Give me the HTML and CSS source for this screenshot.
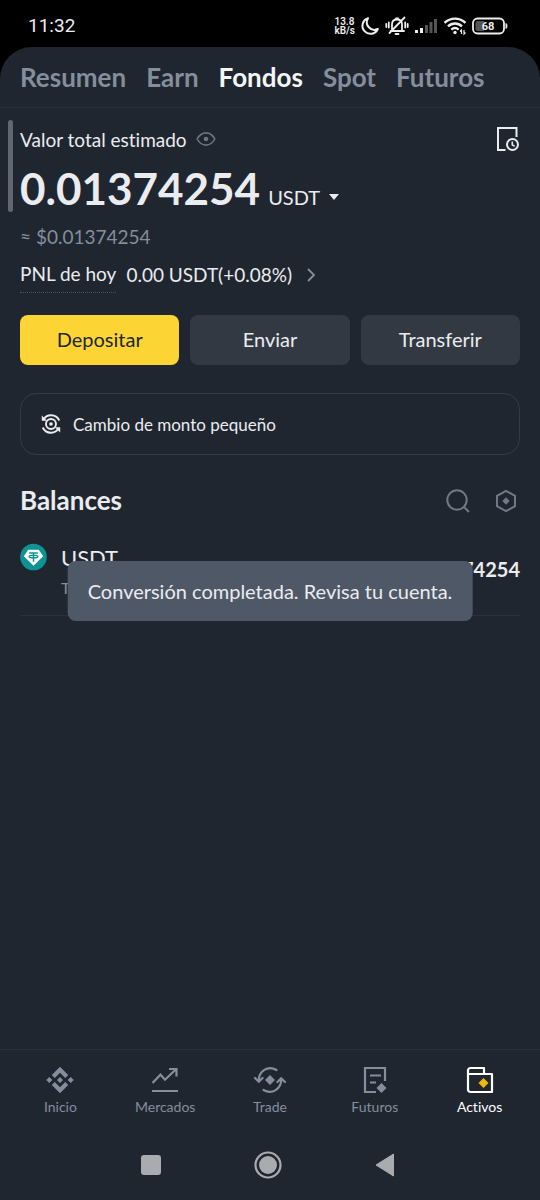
FILE: index.html
```
<!DOCTYPE html>
<html lang="es">
<head>
<meta charset="utf-8">
<meta name="viewport" content="width=device-width, initial-scale=1">
<title>Fondos</title>
<link rel="stylesheet" href="styles.css">
</head>
<body>
<div class="screen">
  <header class="status">
    <time class="clock">11:32</time>
    <div class="status-icons">
      <span class="speed">13.8<br>kB/s</span>
      <svg width="20" height="20" viewBox="0 0 20 20"><path d="M8 2.2A8 8 0 1 0 17.8 13 7.600 7.600 0 0 1 8 2.200Z" fill="none" stroke="#eee" stroke-width="2" stroke-linejoin="round"/></svg>
      <svg width="24" height="20" viewBox="0 0 24 20" fill="none" stroke="#eee" stroke-width="1.800" stroke-linecap="round" stroke-linejoin="round"><path d="M5.500 15h13.500M7 15V8.500c0-3 2-5 5-5s5 2 5 5V15M11 2.500h2M10.500 18h3M19.500 1.500 4.500 17M3.800 6.500v5M1.300 8v3M20.200 6.500v5M22.700 8v3"/></svg>
      <svg width="24" height="20" viewBox="0 0 24 20"><path d="M1 14h3v3H1zM6 12h3v5H6z" fill="#eee"/><path d="M11 9h3v8h-3zM15.500 6h3v11h-3zM20 3h3v14h-3z" fill="#555"/></svg>
      <svg width="24" height="20" viewBox="0 0 24 20" fill="none" stroke="#eee" stroke-width="2.400"><path d="M1.500 6.800c6-5.600 15-5.600 21 0M5 10.300c4-3.800 10-3.800 14 0M8.300 13.600c2.200-2 5.200-2 7.400 0"/><circle cx="12" cy="16.500" r="1.700" fill="#eee" stroke="none"/><path d="M18.500 18v-4l-1.500 1.500M21 14v4l1.500-1.500" stroke-width="1.200"/></svg>
      <svg width="36" height="18" viewBox="0 0 36 18"><rect x="1" y="1.500" width="31" height="15" rx="4.500" fill="none" stroke="#eee" stroke-width="1.800"/><path d="M5.500 4H12v10H5.500A2 2 0 0 1 3.500 12V6a2 2 0 0 1 2-2Z" fill="#555"/><path d="M34 6.500c1.300.8 1.300 4.200 0 5z" fill="#eee" stroke="#eee"/><text class="battery" x="16" y="13" text-anchor="middle">68</text></svg>
    </div>
  </header>

  <div class="app">
    <nav class="tabs">
      <a href="#">Resumen</a><a href="#">Earn</a><a href="#" class="active" aria-current="page">Fondos</a><a href="#">Spot</a><a href="#">Futuros</a>
    </nav>

    <main class="content">
      <span class="scroll-thumb"></span>
      <section class="summary">
        <div class="summary-head">
          <span>Valor total estimado</span>
          <button class="icon-btn" aria-label="Ocultar saldo"><svg width="20" height="16" viewBox="0 0 20 16" fill="none" stroke="#6b7480" stroke-width="1.600" stroke-linejoin="round"><path d="M1.200 8C3.300 4 6.200 1.900 10 1.900S16.700 4 18.800 8c-2.100 4-5 6.100-8.800 6.100S3.300 12 1.200 8Z"/><circle cx="10" cy="8" r="2.300" fill="#6b7480" stroke="none"/></svg></button>
          <button class="icon-btn history" aria-label="Historial"><svg width="24" height="26" viewBox="0 0 24 26" fill="none" stroke="#eaecef" stroke-width="2"><path d="M9.500 24H2V2h18.500v9"/><circle cx="16.500" cy="18.500" r="5.500"/><path d="M16.300 15.500v3.400l2.300 1.300" stroke-width="1.600"/></svg></button>
        </div>
        <div class="total">
          <strong>0.01374254</strong>
          <button class="unit">USDT <svg width="12" height="8" viewBox="0 0 12 8"><path d="M1 1h10L6 7z" fill="#eaecef"/></svg></button>
        </div>
        <p class="approx">≈ $0.01374254</p>
        <a class="pnl" href="#"><span class="pnl-label">PNL de hoy</span><span>0.00 USDT(+0.08%)</span><svg width="10" height="16" viewBox="0 0 10 16"><path d="m2 2 6 6-6 6" fill="none" stroke="#848e9c" stroke-width="1.800"/></svg></a>
      </section>

      <div class="actions">
        <button class="action primary">Depositar</button>
        <button class="action">Enviar</button>
        <button class="action">Transferir</button>
      </div>

      <button class="convert">
        <svg width="20" height="20" viewBox="0 0 20 20" fill="none" stroke="#eaecef" stroke-width="1.900"><circle cx="10" cy="10" r="5"/><circle cx="10" cy="10" r="1.800" fill="#eaecef" stroke="none"/><path d="M2.500 5.800C5.500-.4 15 -.4 18.300 6.500M17.500 14.200C14.500 20.400 5 20.400 1.700 13.500"/><path d="M.8 1.500v5.300h5.300zM19.200 18.500v-5.300h-5.300z" fill="#eaecef" stroke="none"/></svg>
        <span>Cambio de monto pequeño</span>
      </button>

      <section class="balances">
        <div class="balances-head">
          <h2>Balances</h2>
          <button class="icon-btn" aria-label="Buscar"><svg width="26" height="26" viewBox="0 0 26 26" fill="none" stroke="#707985" stroke-width="2"><circle cx="12" cy="12" r="9.700"/><path d="m19 19 5 5"/></svg></button>
          <button class="icon-btn" aria-label="Ajustes"><svg width="22" height="24" viewBox="0 0 22 24"><path d="M11 1.800 20 6.900v10.200l-9 5.100-9-5.100V6.900z" fill="none" stroke="#707985" stroke-width="2"/><path d="m11 8.300 3.700 3.700-3.700 3.700L7.300 12z" fill="#707985"/></svg></button>
        </div>
        <div class="asset">
          <svg width="27" height="28" viewBox="0 0 28 28"><circle cx="14" cy="14" r="13.800" fill="#0d9393"/><path d="M8.500 6.500h11l4.500 6.700L14 23 4 13.200z" fill="#fff"/><path d="M9.500 9.800h9M14 9.800V19M9.500 13.400c0-1.800 9-1.800 9 0s-9 1.800-9 0Z" fill="none" stroke="#0d9393" stroke-width="1.500"/></svg>
          <div class="asset-name"><span>USDT</span><small>TetherUS</small></div>
          <span class="asset-amount">0.01374254</span>
          <div class="toast" role="status">Conversión completada. Revisa tu cuenta.</div>
        </div>
      </section>
    </main>

    <nav class="bottom-nav">
      <a href="#"><svg width="28" height="28" viewBox="0 0 28 28" fill="#848e9c"><path d="M14 .8l8.200 8.200-3 3L14 6.800 8.800 12l-3-3zM14 27.200 5.800 19l3-3 5.200 5.200 5.200-5.200 3 3zM14 11l3 3-3 3-3-3zM3.300 11l3 3-3 3-3-3zM24.700 11l3 3-3 3-3-3z"/></svg>Inicio</a>
      <a href="#"><svg width="28" height="28" viewBox="0 0 28 28" fill="none" stroke="#848e9c" stroke-width="2.200"><path d="m1.500 17 8-8.300 4.500 5 11-10.500M18 3h7.500v7.500M1 25h26"/></svg>Mercados</a>
      <a href="#"><svg width="34" height="28" viewBox="0 0 34 28" fill="none" stroke="#848e9c" stroke-width="2.200" stroke-linecap="round"><path d="M23.500 4C15-1 5.500 5 5.800 15M2 12l3.800 3.800L9.600 12M10.500 24c8.500 5 18-1 17.700-11M24.400 16l3.800-3.800L32 16"/><path d="m17 9 5 5-5 5-5-5z" fill="#848e9c" stroke="none"/></svg>Trade</a>
      <a href="#"><svg width="28" height="28" viewBox="0 0 28 28" fill="none" stroke="#848e9c" stroke-width="2.200"><path d="M15 26H4V2h20v13M9 9.500h11M9 16.500h6"/><path d="m20.500 17 5 5-5 5-5-5z" fill="#848e9c" stroke="none"/></svg>Futuros</a>
      <a href="#" class="active" aria-current="page"><svg width="28" height="28" viewBox="0 0 28 28" fill="none" stroke="#fff" stroke-width="2.200" stroke-linejoin="round"><path d="M2 8V4.500A2.500 2.500 0 0 1 4.500 2H18v6M2 8h24v18H4.500A2.500 2.500 0 0 1 2 23.500z"/><path d="m17.500 12 5 5-5 5-5-5z" fill="#f0b90b" stroke="none"/></svg>Activos</a>
    </nav>

    <div class="system-nav">
      <button aria-label="Recientes"><svg width="20" height="20" viewBox="0 0 20 20"><rect width="20" height="20" rx="3" fill="#aaabae"/></svg></button>
      <button aria-label="Inicio"><svg width="28" height="28" viewBox="0 0 28 28"><circle cx="14" cy="14" r="12.500" fill="none" stroke="#aaabae" stroke-width="2.200"/><circle cx="14" cy="14" r="9" fill="#aaabae"/></svg></button>
      <button aria-label="Atrás"><svg width="20" height="24" viewBox="0 0 20 24"><path d="M18.500 1v22L1 12z" fill="#aaabae" stroke="#aaabae" stroke-linejoin="round"/></svg></button>
    </div>
  </div>
</div>
</body>
</html>
```
FILE: styles.css
```
* { box-sizing: border-box; }
body {
  margin: 0;
  background: #000;
  color: #eaecef;
  font-family: Lato, "Open Sans", sans-serif;
  font-variant-ligatures: none;
}
svg { display: block; flex: none; }
a { color: inherit; text-decoration: none; }
button {
  margin: 0;
  padding: 0;
  border: 0;
  background: none;
  color: inherit;
  font: inherit;
}
.screen { display: flex; flex-direction: column; min-height: 100vh; }

.status {
  display: flex;
  align-items: center;
  justify-content: space-between;
  height: 47px;
  padding: 4px 32px 0 28px;
  font-family: Roboto, sans-serif;
}
.clock { font-size: 19px; }
.status-icons { display: flex; align-items: center; gap: 5px; }
.speed { font-size: 10px; line-height: 9px; font-weight: 600; }
.battery { font-size: 11px; font-weight: 700; fill: #eee; }

.app {
  flex: 1;
  display: flex;
  flex-direction: column;
  background: #202630;
  border-radius: 32px 32px 0 0;
}
.tabs {
  display: flex;
  gap: 20px;
  padding: 0 20px;
  border-bottom: 1px solid #2b313b;
  color: #848e9c;
  font-size: 26px;
  font-weight: 700;
  line-height: 60px;
}
.tabs .active { color: #f4f5f7; }

.content { flex: 1; position: relative; padding: 12px 20px; }
.scroll-thumb {
  position: absolute;
  left: 8px;
  top: 12px;
  width: 5px;
  height: 92px;
  border-radius: 3px;
  background: #62676f;
}
.summary-head { display: flex; align-items: center; gap: 9px; height: 38px; font-size: 19px; }
.history { margin-left: auto; }
.total { display: flex; align-items: baseline; gap: 8px; line-height: 60px; }
.total strong { font-size: 44px; }
.unit { display: flex; align-items: center; gap: 8px; font-size: 20px; line-height: 24px; }
.approx { margin: 0; color: #848e9c; font-size: 19px; line-height: 38px; }
.pnl { display: flex; align-items: center; gap: 10px; font-size: 19px; line-height: 36px; }
.pnl-label { border-bottom: 1px dotted #4b535f; }
.pnl svg { margin-left: 4px; }

.actions { display: grid; grid-template-columns: repeat(3, 1fr); gap: 11px; margin-top: 22px; }
.action { height: 50px; padding-bottom: 2px; border-radius: 8px; background: #333943; font-size: 20px; }
.primary { background: #fcd535; color: #202630; }

.convert {
  display: flex;
  align-items: center;
  gap: 12px;
  width: 100%;
  height: 62px;
  margin-top: 28px;
  padding: 0 20px;
  border: 1px solid #333b47;
  border-radius: 16px;
  font-size: 17px;
}

.balances-head { display: flex; align-items: center; gap: 24px; margin-top: 28px; height: 36px; padding-right: 3px; }
.balances-head h2 { flex: 1; margin: 0; padding-bottom: 2px; font-size: 26px; font-weight: 700; }
.asset {
  position: relative;
  display: flex;
  align-items: flex-start;
  gap: 14px;
  margin-top: 24px;
  padding-bottom: 12px;
  border-bottom: 1px solid #2b313b;
}
.asset-name { flex: 1; display: flex; flex-direction: column; font-size: 22px; line-height: 30px; }
.asset-name small { color: #848e9c; font-size: 16px; }
.asset-amount { font-size: 20px; font-weight: 700; line-height: 52px; }
.toast {
  position: absolute;
  left: 50%;
  top: 18px;
  transform: translateX(-50%);
  padding: 0 20px;
  border-radius: 8px;
  background: #4f5867;
  font-size: 20px;
  line-height: 60px;
  white-space: nowrap;
}

.bottom-nav {
  display: grid;
  grid-template-columns: repeat(5, 1fr);
  padding: 16px 8px;
  border-top: 1px solid #2b313b;
  color: #848e9c;
  font-size: 14px;
  line-height: 26px;
}
.bottom-nav a { display: flex; flex-direction: column; align-items: center; }
.bottom-nav .active { color: #fff; }

.system-nav { display: flex; justify-content: center; gap: 93px; height: 64px; padding-right: 5px; }
.system-nav button { display: grid; place-items: center; height: 58px; }
```
